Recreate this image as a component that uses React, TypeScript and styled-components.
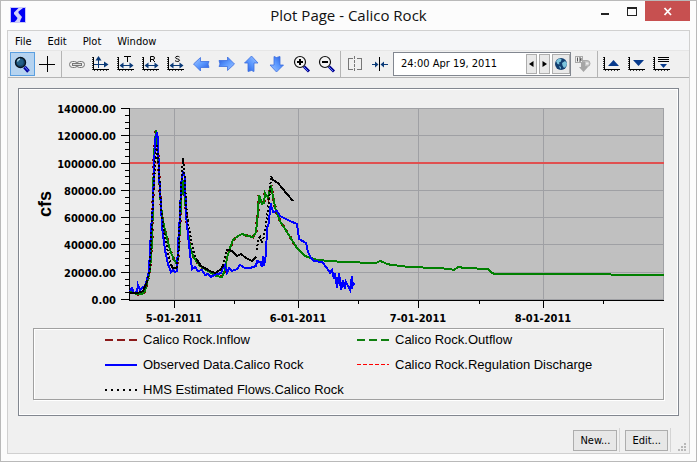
import React from "react";
import styled, { createGlobalStyle } from "styled-components";

const uiFont = `"DejaVu Sans Condensed", "Noto Sans", sans-serif`;

const GlobalStyle = createGlobalStyle`
  * { box-sizing: border-box; }
  body { margin: 0; background: #fcfcfc; font-family: ${uiFont}; font-size: 11px; color: #000; }
  button, input { font: inherit; color: inherit; margin: 0; }
`;

const Frame = styled.div`
  display: flex;
  flex-direction: column;
  min-height: 100vh;
  padding: 0 6px 7px;
  border: 1px solid #b9b9b9;
  background: #fcfcfc;
`;

const TitleBar = styled.header`
  display: grid;
  grid-template-columns: 94px 1fr 94px;
  height: 29px;
`;

const AppIcon = styled.svg`
  width: 16px;
  height: 16px;
  margin: 6px 0 0 3px;
`;

const Title = styled.h1`
  margin: 0;
  text-align: center;
  font: 400 15px/28px "Open Sans", "Noto Sans", sans-serif;
  color: #111;
`;

const Captions = styled.div`
  display: flex;
  justify-content: flex-end;
  height: 20px;
`;

const CaptionButton = styled.button<{ $close?: boolean }>`
  width: ${(p) => (p.$close ? "45px" : "27px")};
  height: 20px;
  padding: 0;
  border: 0;
  background: ${(p) => (p.$close ? "#c75050" : "transparent")};
  svg { display: block; margin: 0 auto; }
`;

const Client = styled.main`
  display: flex;
  flex-direction: column;
  flex: 1;
  border: 1px solid #d0d0d0;
  background: #f0f0f0;
`;

const MenuBar = styled.nav`
  display: flex;
  gap: 16px;
  height: 20px;
  padding: 0 7px;
  background: #f5f6f8;
  border-bottom: 1px solid #e6e6e6;
`;

const MenuItem = styled.button`
  padding: 0;
  border: 0;
  background: transparent;
  line-height: 21px;
`;

const ToolBar = styled.div`
  display: flex;
  align-items: center;
  height: 27px;
  padding-left: 2px;
  border-bottom: 1px solid #b4b4b4;
`;

const ToolGroup = styled.div<{ $inset?: boolean }>`
  display: flex;
  align-items: center;
  height: 26px;
  padding-right: 1px;
  padding-left: ${(p) => (p.$inset ? "2px" : "0")};
  border-left: ${(p) => (p.$inset ? "1px solid #b4b4b4" : "0")};
`;

const ToolButton = styled.button<{ $active?: boolean }>`
  width: 25px;
  height: 24px;
  padding: 0;
  border: 0;
  background: ${(p) => (p.$active ? "#b5d3f0" : "transparent")};
  box-shadow: ${(p) => (p.$active ? "inset 0 0 0 1px #5a9fe0" : "none")};
  svg { display: block; width: 25px; height: 24px; }
`;

const DateField = styled.div`
  display: flex;
  align-items: center;
  gap: 2px;
  width: 178px;
  height: 24px;
  padding: 0 0 0 7px;
  border: 1px solid #828790;
  background: #fff;
`;

const DateInput = styled.input`
  flex: 1;
  min-width: 0;
  padding: 0;
  border: 0;
  outline: 0;
  background: transparent;
  line-height: 20px;
`;

const StepButton = styled.button<{ $wide?: boolean }>`
  display: grid;
  place-items: center;
  width: ${(p) => (p.$wide ? "18px" : "11px")};
  height: 20px;
  padding: 0;
  border: 1px solid #adadad;
  background: #e9e9e9;
`;

const PlotPanel = styled.section`
  margin: 10px;
  margin-bottom: 0;
  padding-bottom: 15px;
  border: 1px solid #828790;
  box-shadow: inset 0 0 0 1px #fff;
`;

const Chart = styled.svg`
  display: block;
  width: 100%;
  height: auto;
`;

const TickText = styled.text`
  font: bold 11px "DejaVu Sans Condensed", "DejaVu Sans", sans-serif;
`;

const UnitText = styled.text`
  font: bold 18px "Liberation Sans", sans-serif;
`;

const Legend = styled.ul`
  display: grid;
  grid-template-columns: 252px 1fr;
  grid-auto-rows: 25px;
  margin: 0 14px;
  padding: 0 0 0 71px;
  height: 72px;
  list-style: none;
  border: 1px solid #a0a0a0;
  box-shadow: inset 1px 1px 0 #fff, 1px 1px 0 #fff;
  font: 13px/21px "Liberation Sans", sans-serif;
`;

const LegendItem = styled.li`
  display: flex;
  align-items: center;
  gap: 6px;
  height: 21px;
  white-space: nowrap;
  svg { flex: none; }
`;

const StatusBar = styled.footer`
  display: flex;
  justify-content: flex-end;
  align-items: center;
  height: 25px;
  margin-top: auto;
  margin-bottom: 1px;
  padding-right: 3px;
`;

const StatusCell = styled.div`
  height: 24px;
  padding: 2px 2px 1px 5px;
  border-right: 1px solid #d4d4d4;
`;

const PushButton = styled.button`
  height: 21px;
  min-width: 42px;
  padding: 0 6px;
  border: 1px solid #adadad;
  background: #e7e7e7;
  line-height: 19px;
`;

const Grip = styled.svg`
  width: 8px;
  height: 8px;
  margin-left: 7px;
  align-self: flex-end;
  margin-bottom: 1px;
`;

const NAVY = "#0a3a78";

const AxisBase = () => (
  <g shapeRendering="crispEdges">
    <path d="M4.500 5V18M4 17.500H20" stroke="#000" fill="none" />
    <path d="M3.500 5V18" stroke="#333" strokeDasharray="1 1" fill="none" />
    <path d="M5 18.500H20" stroke="#333" strokeDasharray="1 2" fill="none" />
  </g>
);

const ScaleIcon = ({ letter }: { letter?: string }) => (
  <svg viewBox="0 0 25 24">
    <AxisBase />
    {letter === undefined && (
      <g stroke={NAVY} fill={NAVY}>
        <path d="M9.500 16V6" />
        <path d="M6.500 8.500l3-4.500 3 4.500z" stroke="none" />
        <path d="M5 12.500H17" />
        <path d="M15 9.500l4.500 3-4.500 3z" stroke="none" />
      </g>
    )}
    {letter !== undefined && (
      <g stroke={NAVY} fill={NAVY}>
        <path d="M8 13.500H17" />
        <path d="M9.500 10.500l-4 3 4 3zM15.500 10.500l4 3-4 3z" stroke="none" />
      </g>
    )}
    {letter === "T" && <path d="M10 4.500h7M13.500 4v6" stroke="#000" fill="none" />}
    {letter === "R" && <path d="M11.500 10V4.500h2.500a1.500 1.500 0 0 1 0 3h-2.500M13.500 7.500l2.500 2.500" stroke="#000" fill="none" />}
    {letter === "S" && <path d="M15.500 5c-1-1-4-1-4 .7 0 1.600 4 .8 4 2.500 0 1.600-3 1.600-4.500.5" stroke="#000" fill="none" />}
  </svg>
);

const ArrowIcon = ({ turn }: { turn: number }) => (
  <svg viewBox="0 0 25 24">
    <defs>
      <linearGradient id={`blue${turn}`} x1="0" y1="0" x2="1" y2="1">
        <stop offset="0" stopColor="#a5c8ff" />
        <stop offset="0.500" stopColor="#5c99ff" />
        <stop offset="1" stopColor="#2458dc" />
      </linearGradient>
    </defs>
    <path
      transform={`rotate(${turn} 12.500 12)`}
      d="M4.500 12L11.500 5.500V9.500H20l-1 2.500 1 3.500H11.500V19z"
      fill={`url(#blue${turn})`}
      stroke="#3c6fe0"
      strokeWidth="0.800"
    />
  </svg>
);

const ZoomIcon = ({ plus }: { plus?: boolean }) => (
  <svg viewBox="0 0 25 24">
    <path d="M15 14.500l5 5" stroke="#000090" strokeWidth="3" />
    <path d="M14.500 14.500l4.500 4.500" stroke="#5c7cff" strokeWidth="1" />
    <circle cx="11" cy="10" r="5.500" fill="#f4f4f4" stroke="#111" strokeWidth="1.200" />
    <path d={plus ? "M8 10h6M11 7v6" : "M8 10h6"} stroke="#000" strokeWidth="2" shapeRendering="crispEdges" />
  </svg>
);

const LensIcon = () => (
  <svg viewBox="0 0 25 24">
    <path d="M14.500 15l4 4.500" stroke="#0000a0" strokeWidth="3.500" />
    <path d="M14.500 14.500l3.500 4" stroke="#6a80ff" strokeWidth="1" />
    <circle cx="10.500" cy="10.500" r="5" fill="#16486f" stroke="#071420" strokeWidth="1.400" />
    <circle cx="10" cy="10" r="3.300" fill="#235f86" />
    <path d="M7.500 9.500a3 3 0 0 1 2.500-2.500" stroke="#b8dceb" strokeWidth="1.400" fill="none" />
  </svg>
);

const CrossIcon = () => (
  <svg viewBox="0 0 25 24" shapeRendering="crispEdges">
    <path d="M12.500 4v16M4 12.500h16" stroke="#000" />
  </svg>
);

const LinkIcon = () => (
  <svg viewBox="0 0 25 24" fill="none" stroke="#777">
    <rect x="5.500" y="9.500" width="8" height="6" rx="3" />
    <rect x="12.500" y="9.500" width="8" height="6" rx="3" />
    <path d="M8 12.500h10" strokeWidth="3" />
    <path d="M9 12.500h8" stroke="#ddd" />
  </svg>
);

const SplitIcon = () => (
  <svg viewBox="0 0 25 24" fill="none" stroke="#777" shapeRendering="crispEdges">
    <path d="M10 6.500H5.500v11H10M14 6.500h4.500v11H14" />
    <path d="M11.500 4v16" strokeDasharray="3 1" />
  </svg>
);

const MeetIcon = () => (
  <svg viewBox="0 0 25 24">
    <path d="M11.500 5v14" stroke="#000" shapeRendering="crispEdges" />
    <path d="M4 12.500h4M15 12.500h5" stroke={NAVY} />
    <path d="M7 9.500l3.500 3-3.500 3zM16 9.500l-3.500 3 3.500 3z" fill={NAVY} />
  </svg>
);

const GlobeIcon = () => (
  <svg width="14" height="14" viewBox="0 0 14 14">
    <circle cx="7" cy="7" r="6" fill="#123f70" />
    <path d="M2 4l3-2.500 2.500.5-.5 2.500-2 1 .5 2-2-.5zM8 6l3-2 2 2-.5 3-2.500 2-1.500-2.500zM5 9l2 1-.5 2.500z" fill="#7cc4dc" />
  </svg>
);

const PasteTimeIcon = () => (
  <svg viewBox="0 0 25 24">
    <path d="M11 8.500h5a3 3 0 0 1 0 6h-5z" fill="#c4c4c4" stroke="#aaa" />
    <path d="M15 10.500h2.500v2H15z" fill="#eee" />
    <path d="M10 9.500h4V15h3l-4.500 5L8 15h2z" fill="#a6a6a6" />
    <rect x="4.500" y="4.500" width="7" height="6" fill="#f0f0f0" stroke="#aaa" />
    <path d="M6.500 5.500v4M8 6h2v1.500H8.500M10 7.500v1.500H8" stroke="#555" fill="none" />
  </svg>
);

const StackIcon = ({ kind }: { kind: "up" | "down" | "list" }) => (
  <svg viewBox="0 0 25 24">
    <AxisBase />
    {kind === "up" && <path d="M8 14h11l-5.500-6z" fill="#073a8c" />}
    {kind === "down" && <path d="M8 8h11l-5.500 6z" fill="#073a8c" />}
    {kind === "list" && (
      <>
        <path d="M8 5.500h11M8 7.500h11M8 9.500h11" stroke="#000" shapeRendering="crispEdges" />
        <path d="M10 12h7l-3.500 4z" fill="#073a8c" />
      </>
    )}
  </svg>
);

const yLabels = ["140000.00", "120000.00", "100000.00", "80000.00", "60000.00", "40000.00", "20000.00", "0.00"];
const yMajors = [108, 135, 163, 190, 217, 244, 272, 299];
const yMinors = [115, 122, 128, 142, 149, 156, 170, 176, 183, 197, 203, 210, 224, 231, 238, 251, 258, 265, 279, 285, 292];
const xMajors = [
  { x: 174, label: "5-01-2011" },
  { x: 298, label: "6-01-2011" },
  { x: 418, label: "7-01-2011" },
  { x: 543, label: "8-01-2011" },
];
const xMinors = [234, 358, 479, 603];

const inflow =
  "130,292 137,294 142,294 145,291 147,283 150,270 152,243 153,200 154,155 156,130 158,150 160,195 162,215 164,226 167,238 170,250 174,260 177,264 178,258 180,227 181,200 183,180 185,200 187,225 189,240 191,250 194,258 200,266 208,271 216,276 222,277 225,270 227,258 230,248 233,240 238,236 242,234 248,236 253,237 256,232 258,212 259,195 262,204 264,203 265,193 268,198 271,185 273,197 276,211 280,221 287,232 297,248";
const outflow = `${inflow} 305,256 317,260 330,261 343,262 376,263 380,261 383,262 387,264 392,265 402,266 408,267 438,268 450,269 454,270 458,267 465,268 488,269 492,273 495,274 610,274 612,275 664,275`;
const observed =
  "130,291 132,288 134,293 137,292 138,285 140,290 143,287 145,286 147,279 149,271 151,230 153,205 154,170 155,140 157,132 158,140 159,175 161,205 162,227 165,250 168,264 171,272 173,270 175,272 177,271 178,245 180,215 181,185 183,171 185,178 186,215 188,235 190,254 192,269 195,267 198,271 202,270 205,275 208,274 211,277 214,275 218,274 221,273 223,268 225,265 227,273 229,268 232,271 237,269 240,265 245,268 250,268 256,266 257,261 260,262 262,267 263,256 264,266 266,254 267,228 269,223 270,208 271,205 273,212 277,211 280,216 290,221 297,224 299,239 306,243 308,252 311,258 314,261 322,262 327,268 330,273 332,270 334,279 335,273 337,288 339,273 341,290 343,280 345,289 346,282 350,290 352,276 352,289 353,283 355,284";
const hmsSolid = [
  "130,293 138,293 143,291 147,282",
  "171,265 173,268 177,268",
  "197,260 201,266 210,271 215,273 220,270 223,266",
  "226,250 230,250 233,252 237,256 241,254 246,258 252,261 256,257",
  "271,176 273,180 278,183 282,188 293,201",
];
const hmsDotted = [
  "147,282 150,270 151,243 153,200 155,165 157,144 159,170 161,207 163,225 167,248 171,265",
  "177,268 179,245 180,210 182,170 183,158 185,180 186,205 188,222 191,239 194,254 197,260",
  "223,266 225,258 226,250",
  "257,250 258,240 260,237 262,243 264,236 266,224 268,210 270,190 271,176",
];

const FlowChart = () => (
  <Chart viewBox="19 89 659 239" role="img" aria-label="Flow in cfs at Calico Rock">
    <g shapeRendering="crispEdges" fill="none">
      <rect x="130" y="108" width="534" height="192" fill="#c0c0c0" />
      <g stroke="#9fa0a4">
        {yMajors.map((y) => <path key={y} d={`M130 ${y + 0.5}H664`} />)}
        {xMajors.map(({ x }) => <path key={x} d={`M${x + 0.5} 108V300`} />)}
        <path d="M663.500 108V300" />
      </g>
      <path d="M130 163H664" stroke="#e05050" strokeWidth="2" />
      <g stroke="#000">
        <path d="M129.500 108V300M129 300.500H664" />
        {yMajors.map((y) => <path key={y} d={`M121 ${y + 0.5}H130`} />)}
        {yMinors.map((y) => <path key={y} d={`M125 ${y + 0.5}H130`} />)}
        {xMajors.map(({ x }) => <path key={x} d={`M${x + 0.5} 300V308`} />)}
        {xMinors.map((x) => <path key={x} d={`M${x + 0.5} 300V304`} />)}
      </g>
      <polyline points={inflow} stroke="#800000" strokeWidth="3" strokeDasharray="2 5" />
      <polyline points={outflow} stroke="#008000" strokeWidth="2" />
      <polyline points={observed} stroke="#0000ff" strokeWidth="2" />
      {hmsSolid.map((p) => <polyline key={p} points={p} stroke="#000" strokeWidth="2" />)}
      {hmsDotted.map((p) => <polyline key={p} points={p} stroke="#000" strokeWidth="2" strokeDasharray="2 2" />)}
    </g>
    {yMajors.map((y, i) => (
      <TickText key={y} x="116" y={y + 5} textAnchor="end">{yLabels[i]}</TickText>
    ))}
    {xMajors.map(({ x, label }) => (
      <TickText key={x} x={x} y="322" textAnchor="middle">{label}</TickText>
    ))}
    <UnitText transform="translate(51 204) rotate(-90)" textAnchor="middle">cfs</UnitText>
  </Chart>
);

const series = [
  { name: "Calico Rock.Inflow", color: "#8b1a1a", width: 2, dash: "8 4" },
  { name: "Calico Rock.Outflow", color: "#108010", width: 2, dash: "8 4" },
  { name: "Observed Data.Calico Rock", color: "#0000ff", width: 2, dash: "none" },
  { name: "Calico Rock.Regulation Discharge", color: "#ff0000", width: 1, dash: "4 2" },
  { name: "HMS Estimated Flows.Calico Rock", color: "#000000", width: 2, dash: "2 4" },
];

export default function App() {
  return (
    <>
      <GlobalStyle />
      <Frame>
        <TitleBar>
          <AppIcon viewBox="0 0 16 16">
            <rect width="16" height="16" fill="#c8c8fa" />
            <rect x="1" y="1" width="14" height="14" fill="#0000f5" />
            <path d="M8.500 1H13L8.500 4.500V6L12 10l-1.500 3-.5 2H4.500l2-2 1-2L4 7V5.500z" fill="#d4d4fa" />
          </AppIcon>
          <Title>Plot Page - Calico Rock</Title>
          <Captions>
            <CaptionButton aria-label="Minimize">
              <svg width="27" height="20" shapeRendering="crispEdges"><path d="M10 13h8" stroke="#222" strokeWidth="2" /></svg>
            </CaptionButton>
            <CaptionButton aria-label="Maximize">
              <svg width="27" height="20" shapeRendering="crispEdges"><path d="M9.500 7v7.500h9V7" stroke="#222" fill="none" /><path d="M9 7h10" stroke="#222" strokeWidth="2" /></svg>
            </CaptionButton>
            <CaptionButton $close aria-label="Close">
              <svg width="45" height="20"><path d="M19.500 7l6.500 7M26 7l-6.500 7" stroke="#fff" strokeWidth="1.800" /></svg>
            </CaptionButton>
          </Captions>
        </TitleBar>
        <Client>
          <MenuBar>
            <MenuItem>File</MenuItem>
            <MenuItem>Edit</MenuItem>
            <MenuItem>Plot</MenuItem>
            <MenuItem>Window</MenuItem>
          </MenuBar>
          <ToolBar>
            <ToolGroup>
              <ToolButton $active aria-label="Zoom mode"><LensIcon /></ToolButton>
              <ToolButton aria-label="Crosshair"><CrossIcon /></ToolButton>
            </ToolGroup>
            <ToolGroup $inset>
              <ToolButton aria-label="Link axes"><LinkIcon /></ToolButton>
              <ToolButton aria-label="Autoscale"><ScaleIcon /></ToolButton>
              <ToolButton aria-label="Scale T"><ScaleIcon letter="T" /></ToolButton>
              <ToolButton aria-label="Scale R"><ScaleIcon letter="R" /></ToolButton>
              <ToolButton aria-label="Scale S"><ScaleIcon letter="S" /></ToolButton>
              <ToolButton aria-label="Left"><ArrowIcon turn={0} /></ToolButton>
              <ToolButton aria-label="Right"><ArrowIcon turn={180} /></ToolButton>
              <ToolButton aria-label="Up"><ArrowIcon turn={90} /></ToolButton>
              <ToolButton aria-label="Down"><ArrowIcon turn={270} /></ToolButton>
              <ToolButton aria-label="Zoom in"><ZoomIcon plus /></ToolButton>
              <ToolButton aria-label="Zoom out"><ZoomIcon /></ToolButton>
            </ToolGroup>
            <ToolGroup $inset>
              <ToolButton aria-label="Split"><SplitIcon /></ToolButton>
              <ToolButton aria-label="Center on time"><MeetIcon /></ToolButton>
              <DateField>
                <DateInput aria-label="Date and time" defaultValue="24:00 Apr 19, 2011" />
                <StepButton aria-label="Previous step"><svg width="5" height="6"><path d="M4.500 0v6L0 3z" /></svg></StepButton>
                <StepButton aria-label="Next step"><svg width="5" height="6"><path d="M.5 0v6L5 3z" /></svg></StepButton>
                <StepButton $wide aria-label="Time zone"><GlobeIcon /></StepButton>
              </DateField>
              <ToolButton aria-label="Apply date"><PasteTimeIcon /></ToolButton>
            </ToolGroup>
            <ToolGroup $inset>
              <ToolButton aria-label="Move up"><StackIcon kind="up" /></ToolButton>
              <ToolButton aria-label="Move down"><StackIcon kind="down" /></ToolButton>
              <ToolButton aria-label="Move to bottom"><StackIcon kind="list" /></ToolButton>
            </ToolGroup>
          </ToolBar>
          <PlotPanel>
            <FlowChart />
            <Legend>
              {series.map((s) => (
                <LegendItem key={s.name}>
                  <svg width="32" height="5" shapeRendering="crispEdges">
                    <path
                      d={s.width === 1 ? "M0 2.5H32" : "M0 3H32"}
                      stroke={s.color}
                      strokeWidth={s.width}
                      strokeDasharray={s.dash}
                    />
                  </svg>
                  {s.name}
                </LegendItem>
              ))}
            </Legend>
          </PlotPanel>
          <StatusBar>
            <StatusCell><PushButton>New...</PushButton></StatusCell>
            <StatusCell><PushButton>Edit...</PushButton></StatusCell>
            <Grip viewBox="0 0 8 8" shapeRendering="crispEdges">
              <path d="M6 0h2v2H6zM3 3h2v2H3zM6 3h2v2H6zM0 6h2v2H0zM3 6h2v2H3zM6 6h2v2H6z" fill="#b8b8b8" />
            </Grip>
          </StatusBar>
        </Client>
      </Frame>
    </>
  );
}
